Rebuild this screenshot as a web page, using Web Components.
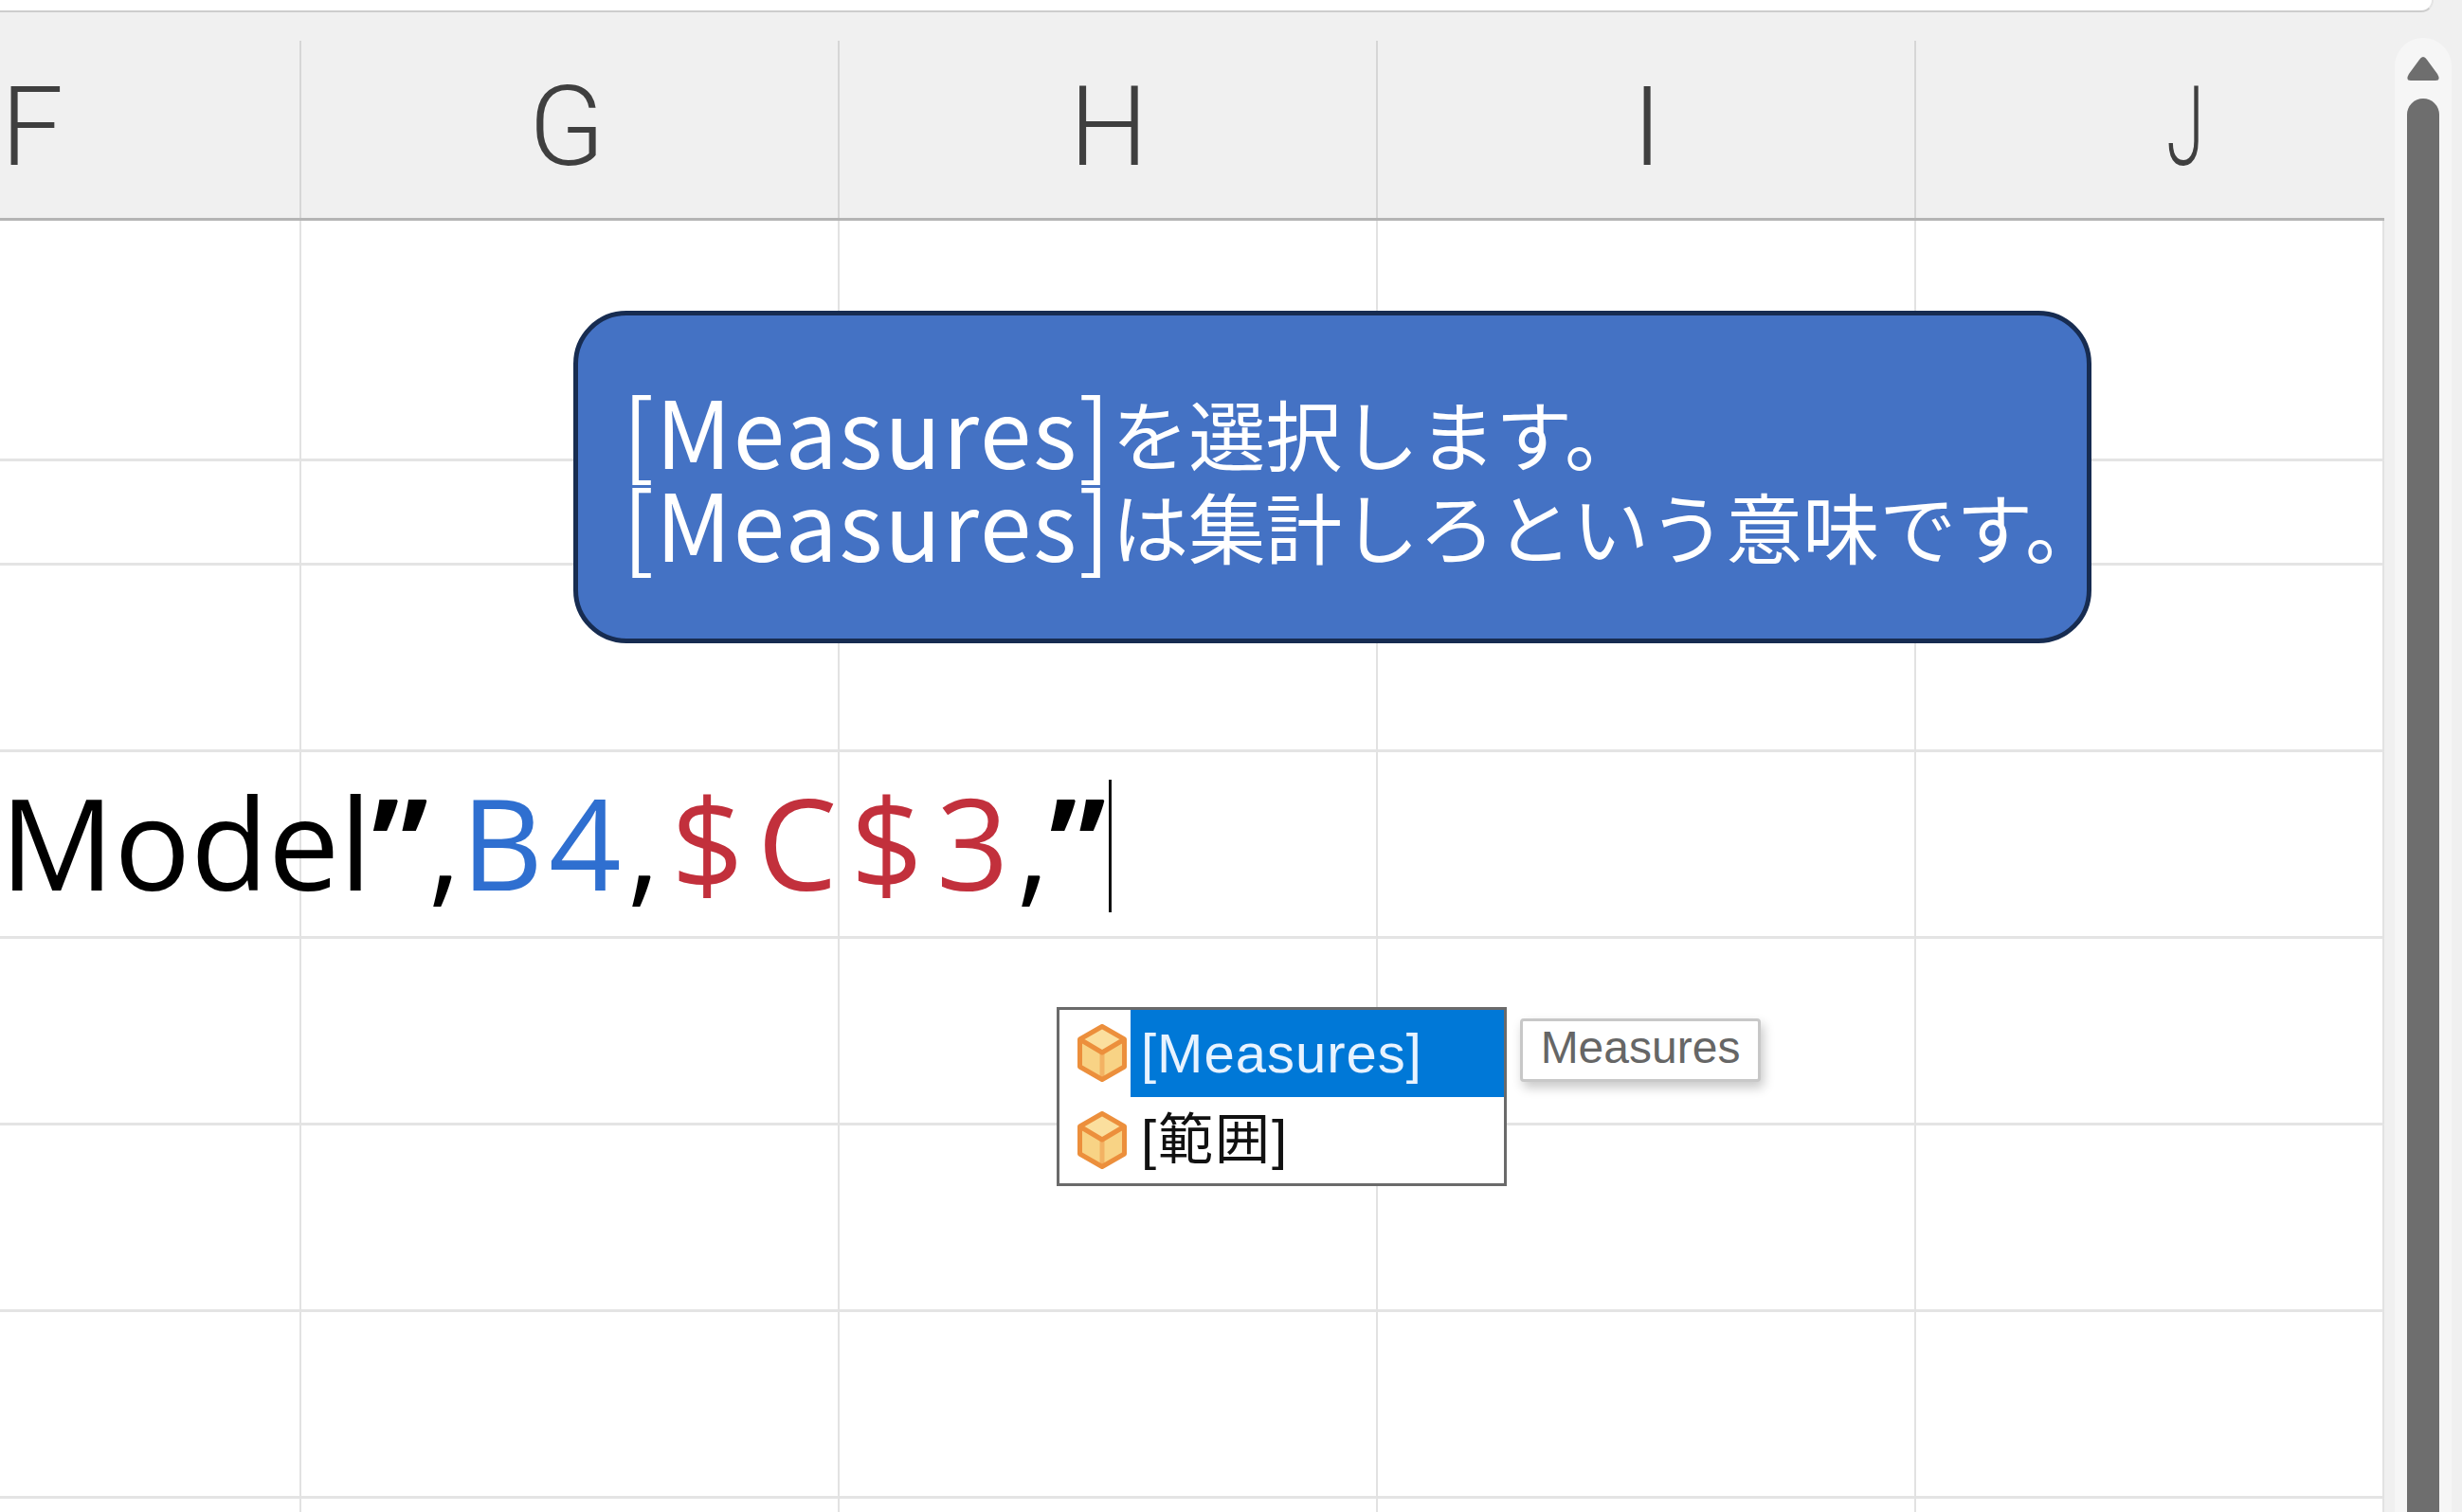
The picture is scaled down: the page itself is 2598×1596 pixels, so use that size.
<!DOCTYPE html>
<html lang="ja"><head><meta charset="utf-8"><style>html,body{margin:0;padding:0;background:#f0f0f0}</style></head>
<body>
<xl-app>
  <xl-sheet>
    <xl-callout>
      <xl-callout-line latin="[Measures]">を選択します。</xl-callout-line>
      <xl-callout-line latin="[Measures]">は集計しろという意味です。</xl-callout-line>
    </xl-callout>
    <xl-suggest></xl-suggest>
    <xl-tip>Measures</xl-tip>
  </xl-sheet>
</xl-app>
<script>
const def=(n,html)=>customElements.define(n,class extends HTMLElement{constructor(){super();this.attachShadow({mode:'open'}).innerHTML=html}});
const COLS=[318,568,568,568,494];
const ROWS=[254,110,197,197,197,197,197,40];
const CUBE=`<svg width="52" height="61" viewBox="0 0 52 61"><path d="M26 2.5 49.5 16 26 30 2.5 16Z" fill="#fbdf9e"/><path d="M2.5 16 26 30V58.5L2.5 45Z M49.5 16 26 30V58.5L49.5 45Z" fill="#f8d385"/><path d="M26 30V58.5" stroke="#f3b263" stroke-width="5" fill="none"/><path d="M26 2.5 49.5 16V45L26 58.5 2.5 45V16ZM2.5 16 26 30 49.5 16" fill="none" stroke="#ec8f3c" stroke-width="5" stroke-linejoin="round"/></svg>`;
def('xl-app',`<style>
:host{display:flex;flex-direction:column;width:2598px;height:1596px;overflow:hidden;background:#f0f0f0;font-family:"Liberation Sans",sans-serif}
.top{flex:none;height:11px;width:2566px;background:#fff;border-bottom:2px solid #cdcdcd;border-right:2px solid #e4e4e4;border-bottom-right-radius:14px}
.main{flex:1;display:flex;min-height:0}
.gap{flex:none;width:11px}
</style><div class="top"></div><div class="main"><slot></slot><span class="gap"></span><xl-scrollbar></xl-scrollbar></div>`);
def('xl-scrollbar',`<style>
:host{display:flex;flex-direction:column;align-items:center;flex:none;width:60px;margin-top:27px;background:#f6f6f6;border-radius:30px 30px 0 0;box-sizing:border-box;padding-top:18px}
svg{display:block;flex:none}
.thumb{flex:1;width:34px;margin-top:18px;background:#6e6e6e;border-radius:17px 17px 0 0}
</style><svg width="34" height="28" viewBox="0 0 34 28"><path d="M17 2Q19 2 21 5L32 20Q36 27 30 27H4Q-2 27 2 20L13 5Q15 2 17 2Z" fill="#6e6e6e"/></svg><div class="thumb"></div>`);
customElements.define('xl-sheet',class extends HTMLElement{constructor(){super();
 const heads=['F','G','H','I','J'].map((t,i)=>`<div class="h h${i}"><span>${t}</span></div>`).join('');
 let cells='';ROWS.forEach((_,r)=>COLS.forEach((_,c)=>{cells+=`<div class="cell" style="grid-row:${r+1};grid-column:${c+1}"></div>`}));
 const gc=COLS.map(c=>c+'px').join(' ');
 this.attachShadow({mode:'open'}).innerHTML=`<style>
:host{display:flex;flex-direction:column;flex:none;width:2516px;position:relative}
.head{flex:none;display:grid;grid-template-columns:${gc};height:220px;border-bottom:3px solid #b4b4b4;box-sizing:border-box}
.h{display:flex;overflow:hidden;align-items:center;background:linear-gradient(#d6d6d6,#d6d6d6) right 30px/2px 100% no-repeat}
.h span{flex:none;width:568px;text-align:center;font:300 117px/1 Roboto,sans-serif;color:#3f3f3f;padding-top:25px}
.h0{justify-content:flex-end}.h4{background:none}
.h1 span{margin-left:-4px}
.h4 span{transform:scaleX(.62)}
.body{flex:1;display:grid;grid-template-columns:${gc};grid-template-rows:${ROWS.map(c=>c+'px').join(' ')};background:#fff;overflow:hidden}
.cell{border-right:2px solid #e2e2e2;border-bottom:3px solid #e4e4e4;box-sizing:border-box}
xl-formula{grid-row:4;grid-column:1/-1}
</style><div class="head">${heads}</div><div class="body">${cells}<xl-formula></xl-formula></div><slot></slot>`;
 }});
def('xl-formula',`<style>
:host{display:flex;align-items:center;white-space:nowrap;font:134px/1 "Open Sans",sans-serif;color:#000;min-width:0}
.b{color:#2f6fd0;letter-spacing:6px}.r{color:#c2303c;letter-spacing:14px;margin-left:12px}.r i{font-style:normal;letter-spacing:8px}
.q{font-weight:700}
.caret{flex:none;width:3px;height:140px;background:#111;margin-left:3px}
.t{padding-bottom:10px}
</style><span class="t">Model<span class="q">”</span>,<span class="b">B4</span>,<span class="r">$C$<i>3</i></span>,<span class="q">”</span></span><span class="caret"></span>`);
def('xl-callout',`<style>
:host{position:absolute;left:605px;top:315px;width:1602px;height:351px;box-sizing:border-box;background:#4472c4;border:5px solid #172c51;border-radius:56px;color:#fff;display:flex;flex-direction:column;justify-content:center;padding:0 0 6px 47px;white-space:nowrap}
</style><slot></slot>`);
customElements.define('xl-callout-line',class extends HTMLElement{constructor(){super();
 this.attachShadow({mode:'open'}).innerHTML=`<style>
:host{display:block;height:98px;line-height:98px;font-family:"Noto Sans CJK JP",sans-serif;font-weight:400}
.l{font-size:98px;letter-spacing:2px}
.c{font-size:81px;vertical-align:4px}
</style><span class="l">${this.getAttribute('latin')}</span><span class="c"><slot></slot></span>`}});
customElements.define('xl-suggest',class extends HTMLElement{constructor(){super();
 const row=(t,s)=>`<div class="row"><span class="ic">${CUBE}</span><span class="tx${s?' sel':''}">${t}</span></div>`;
 this.attachShadow({mode:'open'}).innerHTML=`<style>
:host{position:absolute;left:1115px;top:1050px;width:475px;height:189px;box-sizing:border-box;background:#fff;border:3px solid #6a6a6a;display:flex;flex-direction:column;font:58px/1 "Liberation Sans","Noto Sans CJK JP",sans-serif;color:#111;letter-spacing:2px}
.row{flex:1;display:flex;align-items:stretch}
.ic{flex:none;width:75px;display:flex;align-items:center;justify-content:flex-end;padding-right:4px;box-sizing:border-box}
svg{display:block}
.tx{flex:1;display:flex;align-items:center;padding-left:11px}
.sel{background:#0078d7;color:#e8f3ff;letter-spacing:1px}
</style>${row('[Measures]',1)}${row('[範囲]',0)}`}});
def('xl-tip',`<style>
:host{position:absolute;left:1604px;top:1062px;width:254px;height:67px;box-sizing:border-box;background:#fff;border:3px solid #c8c8c8;border-radius:4px;box-shadow:3px 6px 12px rgba(0,0,0,.22);display:flex;align-items:center;justify-content:center;padding-bottom:6px;font:48px/1 "Liberation Sans",sans-serif;color:#666}
</style><slot></slot>`);
</script>
</body></html>
